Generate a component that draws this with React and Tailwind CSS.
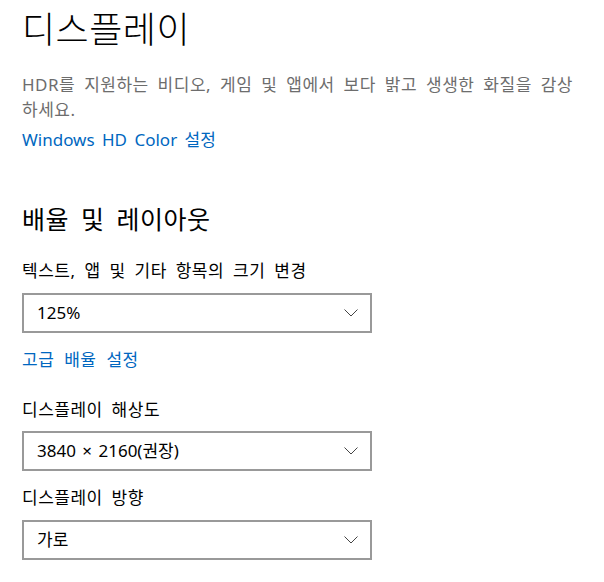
import React from 'react';

const font = { fontFamily: '"Noto Sans", "Noto Sans CJK KR", sans-serif' };

const Chevron = () => (
  <svg width="14" height="8" viewBox="0 0 14 8" fill="none" className="shrink-0">
    <polyline points="0.5,0.5 7,7 13.5,0.5" stroke="#444" strokeWidth="1" />
  </svg>
);

const Dropdown = ({ value, className = '' }) => (
  <div className={`w-[350px] h-[40px] border-2 border-[#999999] bg-white flex items-center justify-between pl-[13px] pr-[12px] ${className}`}>
    <span className="text-[17px] text-black leading-6 [word-spacing:2px]">{value}</span>
    <Chevron />
  </div>
);

const App = () => {
  return (
    <div className="w-[604px] h-[582px] bg-white overflow-hidden pl-[22px]" style={font}>
      <h1 className="mt-[8px] text-[36px] leading-[44px] font-light text-black tracking-[0.5px]">디스플레이</h1>
      <p className="mt-[20px] w-[565px] text-[17px] leading-[25px] text-[#6d6d6d] tracking-[0.5px] [word-spacing:4px]">
        HDR를 지원하는 비디오, 게임 및 앱에서 보다 밝고 생생한 화질을 감상하세요.
      </p>
      <a className="block mt-[6px] text-[17px] leading-[24px] text-[#0067c0] [word-spacing:3px]">Windows HD Color 설정</a>

      <h2 className="mt-[51px] text-[25px] leading-[32px] text-black tracking-[0.5px] [word-spacing:5px]">배율 및 레이아웃</h2>

      <div className="mt-[24px] text-[17px] leading-[24px] text-black tracking-[0.5px] [word-spacing:4px]">텍스트, 앱 및 기타 항목의 크기 변경</div>
      <Dropdown value="125%" className="mt-[10px]" />
      <a className="block mt-[15px] text-[17px] leading-[24px] text-[#0067c0] tracking-[0.5px] [word-spacing:5px]">고급 배율 설정</a>

      <div className="mt-[26px] text-[17px] leading-[24px] text-black tracking-[0.5px] [word-spacing:4px]">디스플레이 해상도</div>
      <Dropdown value="3840 × 2160(권장)" className="mt-[9px]" />

      <div className="mt-[15px] text-[17px] leading-[24px] text-black tracking-[0.5px] [word-spacing:4px]">디스플레이 방향</div>
      <Dropdown value="가로" className="mt-[10px]" />
    </div>
  );
};

export default App;
